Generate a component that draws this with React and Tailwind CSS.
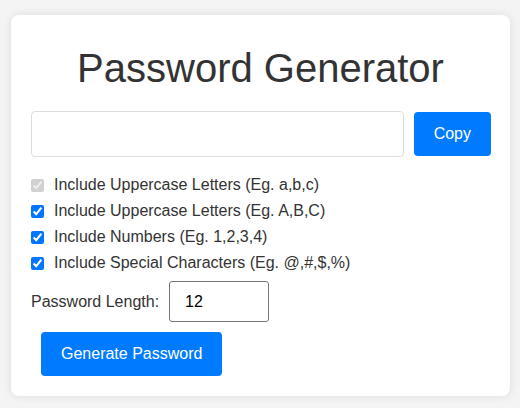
import React, { useState } from 'react';

const options = [
  { id: 'lower', label: 'Include Uppercase Letters (Eg. a,b,c)', disabled: true },
  { id: 'upper', label: 'Include Uppercase Letters (Eg. A,B,C)' },
  { id: 'numbers', label: 'Include Numbers (Eg. 1,2,3,4)' },
  { id: 'special', label: 'Include Special Characters (Eg. @,#,$,%)' },
];

const App = () => {
  const [password, setPassword] = useState('');
  const [length, setLength] = useState(12);
  const [checked, setChecked] = useState({ lower: true, upper: true, numbers: true, special: true });

  const generate = () => {
    let chars = 'abcdefghijklmnopqrstuvwxyz';
    if (checked.upper) chars += 'ABCDEFGHIJKLMNOPQRSTUVWXYZ';
    if (checked.numbers) chars += '0123456789';
    if (checked.special) chars += '@#$%&*!';
    let out = '';
    for (let i = 0; i < length; i++) out += chars[Math.floor(Math.random() * chars.length)];
    setPassword(out);
  };

  return (
    <div className="min-h-[408px] bg-[#f4f4f4] pt-[15px] text-[#333] font-['Liberation_Sans',Arial,sans-serif]">
      <div className="ml-[11px] w-[499px] rounded-[8px] bg-white px-[20px] pb-[20px] shadow-[0_0_10px_rgba(0,0,0,0.1)]">
        <h1 className="pt-[30px] text-center text-[40px] leading-[46px]">Password Generator</h1>

        <div className="mt-[20px] flex items-center gap-[10px]">
          <input
            type="text"
            readOnly
            value={password}
            className="h-[46px] flex-1 rounded-[4px] border border-[#ddd] px-[10px] text-[16px] outline-none"
          />
          <button
            onClick={() => navigator.clipboard?.writeText(password)}
            className="mr-[-1px] h-[44px] rounded-[4px] bg-[#007bff] px-[20px] text-[16px] text-white"
          >
            Copy
          </button>
        </div>

        <div className="mt-[15px]">
          {options.map(o => (
            <label key={o.id} className="flex h-[26px] items-center gap-[10px] text-[16px]">
              <input
                type="checkbox"
                disabled={o.disabled}
                checked={checked[o.id]}
                onChange={e => setChecked({ ...checked, [o.id]: e.target.checked })}
                className="m-0 h-[13px] w-[13px] accent-[#0075ff]"
              />
              {o.label}
            </label>
          ))}
        </div>

        <div className="mt-[5px] flex items-center gap-[10px] text-[16px]">
          <span>Password Length:</span>
          <input
            type="number"
            value={length}
            min="4"
            max="32"
            onChange={e => setLength(e.target.value)}
            className="h-[41px] w-[100px] rounded-[3px] border border-[#767676] pl-[15px] text-[16px] text-black outline-none [appearance:textfield] [&::-webkit-inner-spin-button]:appearance-none"
          />
        </div>

        <button
          onClick={generate}
          className="ml-[10px] mt-[10px] h-[44px] rounded-[4px] bg-[#007bff] px-[20px] text-[16px] text-white"
        >
          Generate Password
        </button>
      </div>
    </div>
  );
};

export default App;
